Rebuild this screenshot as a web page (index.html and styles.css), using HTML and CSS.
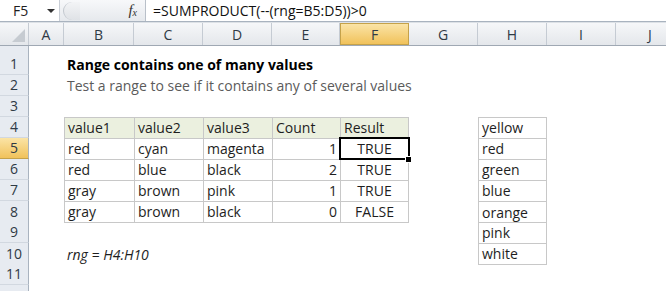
FILE: index.html
```html
<!DOCTYPE html>
<html lang="en">
<head>
  <meta charset="UTF-8">
  <title>Range contains one of many values</title>
  <link rel="stylesheet" href="styles.css">
</head>
<body>
  <div class="fbar">
    <div class="namebox">F5<span class="arrow"></span></div>
    <div class="fxzone">
      <span class="knob"></span>
      <span class="fx"><i>f</i><sub>x</sub></span>
    </div>
    <div class="formula">=SUMPRODUCT(--(rng=B5:D5))&gt;0</div>
  </div>

  <div class="sheet">
    <div class="row colhead">
      <div class="corner"><span class="tri"></span></div>
      <div>A</div><div>B</div><div>C</div><div>D</div><div>E</div>
      <div class="sel">F</div><div>G</div><div>H</div><div>I</div><div>J</div>
    </div>

    <div class="row tall">
      <div class="rh">1</div><div></div>
      <div class="title">Range contains one of many values</div>
    </div>
    <div class="row">
      <div class="rh">2</div><div></div>
      <div class="sub">Test a range to see if it contains any of several values</div>
    </div>
    <div class="row">
      <div class="rh">3</div>
    </div>
    <div class="row">
      <div class="rh">4</div><div></div>
      <div class="tb hd first">value1</div>
      <div class="tb hd">value2</div>
      <div class="tb hd">value3</div>
      <div class="tb hd">Count</div>
      <div class="tb hd last">Result</div>
      <div></div>
      <div class="lst top">yellow</div>
    </div>
    <div class="row">
      <div class="rh sel">5</div><div></div>
      <div class="tb first">red</div>
      <div class="tb">cyan</div>
      <div class="tb">magenta</div>
      <div class="tb num">1</div>
      <div class="tb last mid active">TRUE<span class="handle"></span></div>
      <div></div>
      <div class="lst">red</div>
    </div>
    <div class="row">
      <div class="rh">6</div><div></div>
      <div class="tb first">red</div>
      <div class="tb">blue</div>
      <div class="tb">black</div>
      <div class="tb num">2</div>
      <div class="tb last mid">TRUE</div>
      <div></div>
      <div class="lst">green</div>
    </div>
    <div class="row">
      <div class="rh">7</div><div></div>
      <div class="tb first">gray</div>
      <div class="tb">brown</div>
      <div class="tb">pink</div>
      <div class="tb num">1</div>
      <div class="tb last mid">TRUE</div>
      <div></div>
      <div class="lst">blue</div>
    </div>
    <div class="row">
      <div class="rh">8</div><div></div>
      <div class="tb first bottom">gray</div>
      <div class="tb bottom">brown</div>
      <div class="tb bottom">black</div>
      <div class="tb bottom num">0</div>
      <div class="tb last bottom mid">FALSE</div>
      <div></div>
      <div class="lst">orange</div>
    </div>
    <div class="row">
      <div class="rh">9</div>
      <div></div><div></div><div></div><div></div><div></div><div></div><div></div>
      <div class="lst">pink</div>
    </div>
    <div class="row">
      <div class="rh">10</div><div></div>
      <div class="note">rng = H4:H10</div>
      <div></div><div></div><div></div><div></div><div></div>
      <div class="lst bottom">white</div>
    </div>
    <div class="row">
      <div class="rh">11</div>
    </div>
    <div class="row">
      <div class="rh"></div>
    </div>
  </div>
</body>
</html>
```

FILE: styles.css
```css
body {
  margin: 0;
  width: 666px;
  height: 291px;
  overflow: hidden;
  background-color: #fff;
  font-family: "Open Sans", "Noto Sans", sans-serif;
  font-size: 14px;
  color: #1e1e1e;
}
.fbar {
  display: flex;
  height: 21px;
  border-bottom: 1px solid #a9b3bf;
  background-color: #fff;
}
.namebox {
  width: 60px;
  display: flex;
  align-items: center;
  padding-left: 13px;
  box-sizing: border-box;
  position: relative;
  border-right: 1px solid #c9ced6;
}
.arrow {
  position: absolute;
  left: 47px;
  top: 9px;
  border-left: 4px solid transparent;
  border-right: 4px solid transparent;
  border-top: 4px solid #333;
}
.fxzone {
  width: 86px;
  display: flex;
  align-items: center;
  justify-content: space-between;
  padding: 0 8px 0 3px;
  box-sizing: border-box;
  background: linear-gradient(#f7f8fa, #e6e9ed);
  border-right: 1px solid #b9c0c9;
}
.knob {
  width: 16px;
  height: 18px;
  border-radius: 9px 0 0 9px;
  background: linear-gradient(#f3f4f6, #dfe2e6);
  border-left: 1px solid #c2c7ce;
}
.fx {
  font-family: "Liberation Serif", serif;
  font-size: 15px;
  color: #333;
}
.fx sub {
  font-size: 10px;
  font-style: italic;
  vertical-align: -1px;
}
.formula {
  flex: 1;
  display: flex;
  align-items: center;
  padding-left: 7px;
  color: #111;
  white-space: nowrap;
}
.sheet {
  border-top: 1px solid #dde1e6;
}
.row {
  display: grid;
  grid-template-columns: 29px 35px 70px 69px 69px 68px 69px 69px 69px 69px 69px;
  height: 21px;
}
.row > div {
  display: flex;
  align-items: flex-end;
  padding: 0 3px 1px;
  box-sizing: border-box;
  white-space: nowrap;
  min-width: 0;
}
.row.tall {
  height: 29px;
}
.colhead {
  height: 22px;
  background: linear-gradient(#f6f7f9, #e4e7eb);
  border-bottom: 1px solid #9fa8b3;
}
.colhead > div {
  justify-content: center;
  align-items: center;
  padding: 0;
  border-right: 1px solid #c5cbd3;
  color: #2f3a45;
}
.colhead > .sel {
  background: linear-gradient(#fbe4a6, #f1c25b);
  border: 1px solid #c5a24a;
}
.corner {
  position: relative;
}
.tri {
  position: absolute;
  right: 3px;
  bottom: 3px;
  border-left: 13px solid transparent;
  border-bottom: 13px solid #c6cbd1;
}
.row > .rh {
  justify-content: center;
  padding: 0 0 1px;
  background-color: #e7ebf1;
  border-right: 1px solid #a9b3bf;
  border-bottom: 1px solid #d2d8e0;
  color: #2f3a45;
}
.row > .rh.sel {
  background: linear-gradient(#fbe4a6, #f1c25b);
  border-bottom-color: #c5a24a;
}
.title {
  font-weight: bold;
  color: #000;
}
.sub {
  color: #5b5b5b;
}
.note {
  font-style: italic;
}
.tb {
  border-top: 1px solid #c8c8c8;
  border-left: 1px solid #c8c8c8;
}
.tb.last {
  border-right: 1px solid #c8c8c8;
}
.tb.bottom {
  border-bottom: 1px solid #c8c8c8;
}
.hd {
  background-color: #ebf0df;
}
.row > .num {
  justify-content: flex-end;
}
.row > .mid {
  justify-content: center;
}
.active {
  position: relative;
  outline: 2px solid #000;
  outline-offset: -1px;
}
.handle {
  position: absolute;
  right: -4px;
  bottom: -4px;
  width: 5px;
  height: 5px;
  background-color: #000;
  border: 1px solid #fff;
}
.lst {
  border-left: 1px solid #c8c8c8;
  border-right: 1px solid #c8c8c8;
  border-top: 1px solid #c8c8c8;
}
.lst.bottom {
  border-bottom: 1px solid #c8c8c8;
}
```
